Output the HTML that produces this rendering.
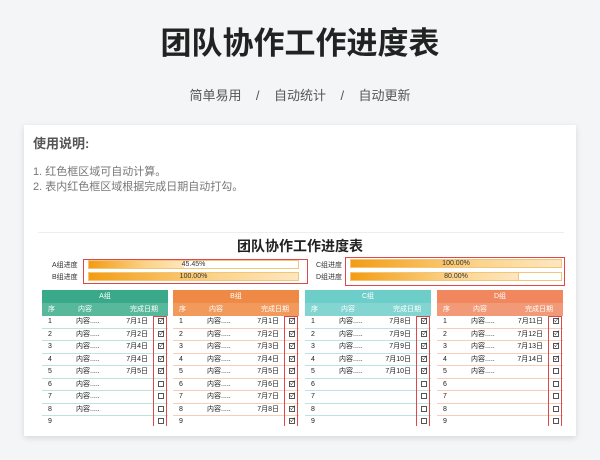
<!DOCTYPE html>
<html><head><meta charset="utf-8"><style>
*{margin:0;padding:0;box-sizing:border-box}
body{width:600px;height:460px;background:#f4f5f7;font-family:"Liberation Sans","Noto Sans CJK SC",sans-serif;position:relative;overflow:hidden}
.t{position:absolute;left:0;width:600px;text-align:center}
#card{position:absolute;left:24px;top:125px;width:552px;height:311px;background:#fff;box-shadow:0 2px 6px rgba(0,0,0,.12);overflow:hidden}
.a{position:absolute}
.lbl{font-size:7px;color:#333}
.bar{position:absolute;height:9px;border:1px solid #f3c57a;background:#fff}
.fill{height:100%;background:linear-gradient(90deg,#f39c12,#fbd38a 60%,#fde7c0)}
.pct{position:absolute;left:0;right:0;top:0;font-size:7px;text-align:center;line-height:8px;color:#333}
.tb{position:absolute;top:165px;width:126px;font-size:7px;color:#222}
.gh{height:13px;line-height:13px;text-align:center;color:#fff}
.ch{height:13px;line-height:13px;color:#fff;position:relative}
.r{height:12.5px;line-height:12px;position:relative}
.r span,.ch span{position:absolute}
.cb{display:inline-block;width:6px;height:6px;border:1px solid #555;vertical-align:middle;font-size:6px;line-height:4px;text-align:center}
.red{position:absolute;border:1.5px solid #e04848}
</style></head><body>
<div class="t" style="top:24px;font-size:31px;font-weight:bold;color:#222;line-height:40px">团队协作工作进度表</div>
<div class="t" style="top:85px;font-size:13px;color:#555">简单易用 &nbsp;&nbsp;&nbsp;/&nbsp;&nbsp;&nbsp; 自动统计 &nbsp;&nbsp;&nbsp;/&nbsp;&nbsp;&nbsp; 自动更新</div>
<div id="card">
<div class="a" style="left:9px;top:8px;font-size:13px;font-weight:bold;color:#555">使用说明:</div>
<div class="a" style="left:9px;top:40px;font-size:11px;color:#777;line-height:15px">1. 红色框区域可自动计算。<br>2. 表内红色框区域根据完成日期自动打勾。</div>
<div class="a" style="left:14px;top:107px;width:526px;border-top:1px solid #eee"></div>
<div class="a" style="left:0;width:552px;top:111px;text-align:center;font-size:14px;font-weight:bold;color:#222">团队协作工作进度表</div>
<div class="a lbl" style="left:28px;top:135px">A组进度</div>
<div class="a lbl" style="left:28px;top:147px">B组进度</div>
<div class="a lbl" style="left:292px;top:135px">C组进度</div>
<div class="a lbl" style="left:292px;top:147px">D组进度</div>
<div class="bar" style="left:64px;top:135px;width:211px"><div class="fill" style="width:45.45%"></div><div class="pct">45.45%</div></div>
<div class="bar" style="left:64px;top:147px;width:211px"><div class="fill" style="width:100%"></div><div class="pct">100.00%</div></div>
<div class="bar" style="left:326px;top:134px;width:212px"><div class="fill" style="width:100%"></div><div class="pct">100.00%</div></div>
<div class="bar" style="left:326px;top:147px;width:212px"><div class="fill" style="width:80%;border-right:1px solid #f3c57a"></div><div class="pct">80.00%</div></div>
<div class="red" style="left:59px;top:134px;width:225px;height:25px"></div>
<div class="red" style="left:321px;top:132px;width:220px;height:29px"></div>
<div id="tabs"></div>
</div>
<script>
var g=[{n:"A组",x:18,h:"#3aa98a",s:"#57b89b",l:"#bfe3dc",d:["7月1日","7月2日","7月4日","7月4日","7月5日"],c:5,m:8},
{n:"B组",x:149,h:"#ee8a45",s:"#f19a5c",l:"#f6cdb8",d:["7月1日","7月2日","7月3日","7月4日","7月5日","7月6日","7月7日","7月8日"],c:9,m:8},
{n:"C组",x:281,h:"#6dcdc8",s:"#82d5d0",l:"#bfe3e4",d:["7月8日","7月9日","7月9日","7月10日","7月10日"],c:5,m:5},
{n:"D组",x:413,h:"#f0875e",s:"#f29a77",l:"#f6cdb8",d:["7月11日","7月12日","7月13日","7月14日"],c:4,m:5}];
var H="";
g.forEach(function(t){
 var s='<div class="tb" style="left:'+t.x+'px"><div class="gh" style="background:'+t.h+'">'+t.n+'</div>';
 s+='<div class="ch" style="background:'+t.s+'"><span style="left:6px">序</span><span style="left:36px">内容</span><span style="right:10px">完成日期</span></div>';
 for(var i=0;i<10;i++){
  s+='<div class="r" style="border-bottom:1px solid '+t.l+'"><span style="left:6px">'+(i+1)+'</span>'+(i<t.m?'<span style="left:34px">内容.....</span>':'')+'<span style="right:20px">'+(t.d[i]||'')+'</span><span style="right:4px;top:0"><i class="cb">'+(i<t.c?'✓':'')+'</i></span></div>';
 }
 s+='</div><div class="red" style="left:'+(t.x+111)+'px;top:191px;width:14px;height:130px;border-bottom:none"></div>';
 H+=s;});
document.getElementById('tabs').innerHTML=H;
</script>
<div class="a" style="left:24px;top:426px;width:552px;height:10px;background:#fff"></div>
</body></html>
